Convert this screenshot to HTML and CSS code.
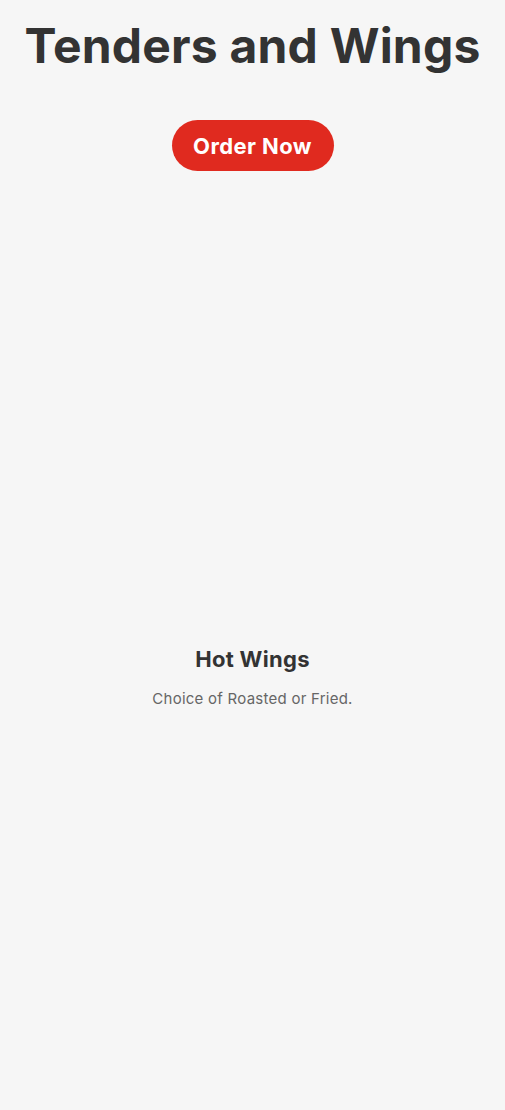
FILE: index.html
```html
<!DOCTYPE html>
<html>
  <head>
    <meta charset="UTF-8" />
    <title>Tenders and Wings</title>
    <link rel="stylesheet" href="styles.css">
  </head>
  <body>
    <section class="hero">
      <h1 class="hero-title">Tenders and Wings</h1>
      <a class="order-btn" href="#">Order Now</a>
    </section>
    <section class="menu-item">
      <div class="item-photo"></div>
      <h2 class="item-name">Hot Wings</h2>
      <p class="item-desc">Choice of Roasted or Fried.</p>
    </section>
  </body>
</html>
```

FILE: styles.css
```css
body {
  margin: 0;
  background-color: #f6f6f6;
  font-family: Inter, "Open Sans", sans-serif;
  color: #333333;
}
.hero {
  display: flex;
  flex-direction: column;
  align-items: center;
  padding-top: 16px;
}
.hero-title {
  margin: 0;
  font-size: 48px;
  line-height: 60px;
  font-weight: 700;
  letter-spacing: 0.2px;
  color: #333333;
}
.order-btn {
  margin-top: 44px;
  width: 162px;
  height: 51px;
  display: flex;
  align-items: center;
  justify-content: center;
  border-radius: 26px;
  background-color: #e02a1f;
  color: #ffffff;
  font-size: 22px;
  font-weight: 700;
  letter-spacing: 0.4px;
  text-decoration: none;
}
.menu-item {
  display: flex;
  flex-direction: column;
  align-items: center;
}
.item-photo {
  width: 100%;
  height: 473px;
}
.item-name {
  margin: 0;
  font-size: 22px;
  line-height: 30px;
  font-weight: 700;
  letter-spacing: 0.3px;
  color: #333333;
}
.item-desc {
  margin: 15px 0 0;
  font-size: 15px;
  line-height: 20px;
  color: #666666;
  letter-spacing: 0.25px;
}
```
